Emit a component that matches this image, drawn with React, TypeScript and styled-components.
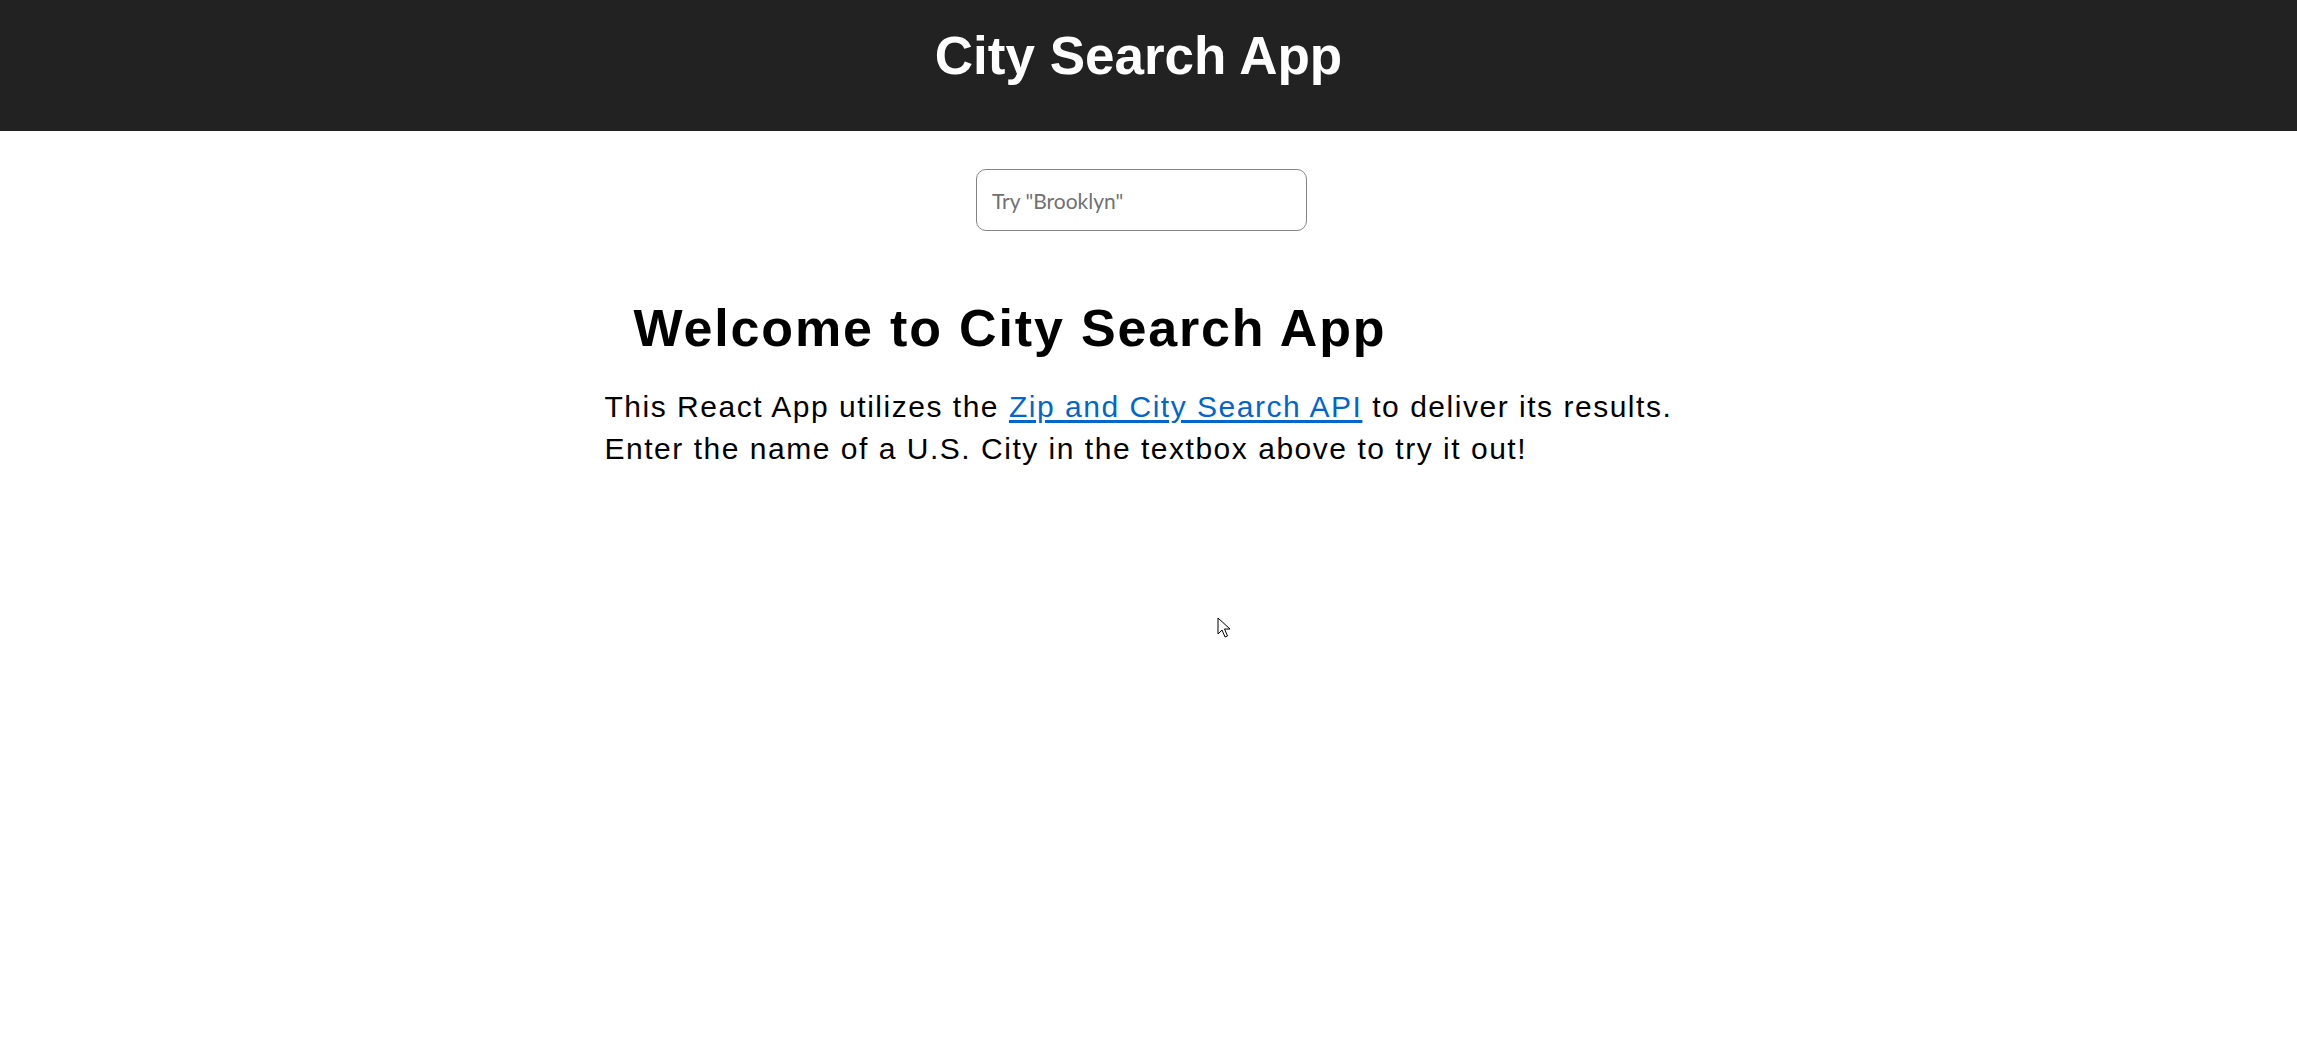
import React from "react";
import styled, { createGlobalStyle } from "styled-components";

const GlobalStyle = createGlobalStyle`
  html, body {
    margin: 0;
    padding: 0;
    background: #ffffff;
    font-family: "Liberation Sans", Arial, sans-serif;
  }
  #root {
    min-height: 100vh;
  }
`;

const Page = styled.div`
  min-height: 100vh;
  display: flex;
  flex-direction: column;
  position: relative;
`;

const Header = styled.header`
  height: 131px;
  background: #222222;
  display: flex;
  align-items: center;
  justify-content: center;
  padding-right: 20px;
  box-sizing: border-box;
`;

const Title = styled.h1`
  margin: 0;
  margin-top: -18px;
  color: #ffffff;
  font-family: "Liberation Sans", Arial, sans-serif;
  font-weight: 700;
  font-size: 53px;
  line-height: 1.15;
`;

const Main = styled.main`
  display: flex;
  flex-direction: column;
  align-items: center;
  padding-right: 14px;
`;

const SearchInput = styled.input`
  margin-top: 38px;
  width: 331px;
  height: 62px;
  box-sizing: border-box;
  border: 1px solid #858585;
  border-radius: 10px;
  padding: 0 15px;
  font-family: Lato, "Open Sans", sans-serif;
  font-size: 21px;
  color: #333;
  outline: none;
  &::placeholder {
    color: #707070;
  }
`;

const Content = styled.section`
  width: 1074px;
  margin-top: 68px;
  display: flex;
  flex-direction: column;
  align-items: flex-start;
`;

const Welcome = styled.h2`
  margin: 0 0 0 29px;
  font-family: "Liberation Sans", Arial, sans-serif;
  font-weight: 700;
  font-size: 52px;
  line-height: 58px;
  letter-spacing: 1.84px;
  color: #000;
`;

const Intro = styled.p`
  margin: 29px 0 0 0;
  font-family: "Liberation Sans", Arial, sans-serif;
  font-size: 30px;
  line-height: 42px;
  letter-spacing: 1.52px;
  color: #000;
`;

const Link = styled.a`
  color: #0066cc;
  text-decoration: underline;
  text-underline-offset: 3px;
`;

const Cursor = styled.svg`
  position: absolute;
  left: 1217px;
  top: 617px;
  width: 14px;
  height: 22px;
  pointer-events: none;
`;

export default function App() {
  return (
    <>
      <GlobalStyle />
      <Page>
        <Header>
          <Title>City Search App</Title>
        </Header>
        <Main>
          <SearchInput type="text" placeholder='Try "Brooklyn"' />
          <Content>
            <Welcome>Welcome to City Search App</Welcome>
            <Intro>
              This React App utilizes the{" "}
              <Link href="#">Zip and City Search API</Link> to deliver its
              results.
              <br />
              Enter the name of a U.S. City in the textbox above to try it out!
            </Intro>
          </Content>
        </Main>
        <Cursor viewBox="0 0 14 22">
          <path
            d="M1 1 L1 17 L5 13 L8 20 L10.5 19 L7.5 12 L13 12 Z"
            fill="#fff"
            stroke="#000"
            strokeWidth="1"
            strokeLinejoin="miter"
          />
        </Cursor>
      </Page>
    </>
  );
}
